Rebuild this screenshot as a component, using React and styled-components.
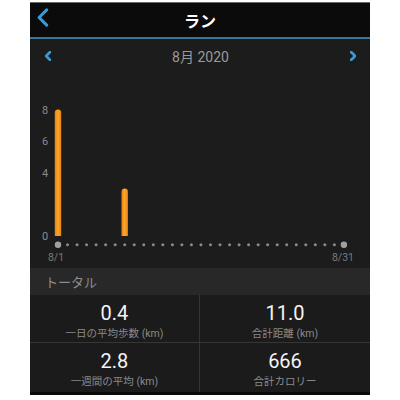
import styled, { createGlobalStyle } from "styled-components";

const GlobalStyle = createGlobalStyle`
	body {
		margin: 0;
		background: #ffffff;
		font-family: "Roboto", "Noto Sans CJK JP", sans-serif;
	}
`;

const Screen = styled.div`
	width: 340px;
	margin: 2px 0 0 30px;
	border-top: 1px solid #6a6a6a;
	border-bottom: 3px solid #0a0a0a;
	background-color: #1c1c1c;
`;

// 上部のナビゲーションバー
const NavBar = styled.div`
	height: 34px;
	display: flex;
	align-items: center;
	justify-content: center;
	position: relative;
	background-color: #0b0b0b;
	border-bottom: 2px solid #36779e;
`;

const NavTitle = styled.div`
	color: #ffffff;
	font-size: 16px;
	font-weight: 700;
`;

const BackButton = styled.div`
	position: absolute;
	left: 7px;
	top: 5px;
	display: flex;
`;

const MonthRow = styled.div`
	height: 33px;
	display: flex;
	align-items: center;
	justify-content: space-between;
	padding: 0 14px 0 15px;
`;

const MonthLabel = styled.div`
	color: #9a9a9a;
	font-size: 14px;
`;

const ChartBox = styled.div`
	height: 196px;
`;

const SectionHeader = styled.div`
	height: 27px;
	display: flex;
	align-items: center;
	padding-left: 15px;
	background-color: #282828;
	color: #8c8c8c;
	font-size: 13px;
`;

const StatGrid = styled.div`
	display: grid;
	grid-template-columns: 1fr 1fr;
	grid-template-rows: 48px 49px;
	background-color: #1b1b1b;
`;

const StatCell = styled.div`
	display: flex;
	flex-direction: column;
	align-items: center;
	padding-top: 6px;
	box-sizing: border-box;
	border-right: ${(p) => (p.$left ? "1px solid #363636" : "none")};
	border-bottom: ${(p) => (p.$top ? "1px solid #363636" : "none")};
`;

const StatValue = styled.div`
	color: #f4f4f4;
	font-size: 20px;
	line-height: 24px;
`;

const StatLabel = styled.div`
	color: #8a8a8a;
	font-size: 10.5px;
	line-height: 14px;
	margin-top: 2px;
`;

const Chevron = ({ dir, size = 10, stroke = 2.6, color = "#3b9ad6" }) => (
	<svg width={size * 0.62} height={size} viewBox="0 0 6 10">
		<path
			d={dir === "left" ? "M5 1 L1 5 L5 9" : "M1 1 L5 5 L1 9"}
			fill="none"
			stroke={color}
			strokeWidth={stroke * (10 / size)}
			strokeLinecap="round"
			strokeLinejoin="round"
		/>
	</svg>
);

// 日ごとの距離 (km)
const daily = Array.from({ length: 31 }, (_, i) => (i === 0 ? 8.0 : i === 7 ? 3.0 : 0));

function RunChart() {
	const x0 = 28;
	const step = 9.53;
	const base = 164;
	const unit = 15.8;
	return (
		<svg width="340" height="196" viewBox="0 0 340 196">
			<defs>
				<linearGradient id="bar" x1="0" x2="1" y1="0" y2="0">
					<stop offset="0" stopColor="#e8820f" />
					<stop offset="0.5" stopColor="#fba62b" />
					<stop offset="1" stopColor="#e8820f" />
				</linearGradient>
				<clipPath id="plot">
					<rect x="0" y="0" width="340" height={base} />
				</clipPath>
			</defs>
			<g clipPath="url(#plot)">
				{daily.map((v, i) =>
					v > 0 ? (
						<rect
							key={"b" + i}
							x={x0 + i * step - 3.2}
							y={base - v * unit}
							width="6.4"
							height={v * unit + 4}
							rx="3.2"
							fill="url(#bar)"
						/>
					) : null
				)}
			</g>
			{[8, 6, 4, 0].map((v) => (
				<text
					key={v}
					x="15"
					y={base - v * unit + 4}
					fill="#8a8a8a"
					fontSize="11"
					textAnchor="middle"
					fontFamily="Roboto, sans-serif"
				>
					{v}
				</text>
			))}
			{daily.map((_, i) => {
				const end = i === 0 || i === 30;
				return (
					<circle
						key={"d" + i}
						cx={x0 + i * step}
						cy="172.7"
						r={end ? 3.2 : 1.5}
						fill={end ? "#a0a0a0" : "#8a8a8a"}
					/>
				);
			})}
			<text x="26" y="189" fill="#7a7a7a" fontSize="10.5" textAnchor="middle" fontFamily="Roboto, sans-serif">
				8/1
			</text>
			<text x="313" y="189" fill="#7a7a7a" fontSize="10.5" textAnchor="middle" fontFamily="Roboto, sans-serif">
				8/31
			</text>
		</svg>
	);
}

const stats = [
	{ value: "0.4", label: "一日の平均歩数 (km)" },
	{ value: "11.0", label: "合計距離 (km)" },
	{ value: "2.8", label: "一週間の平均 (km)" },
	{ value: "666", label: "合計カロリー" },
];

export default function App() {
	return (
		<>
			<GlobalStyle />
			<Screen>
				<NavBar>
					<BackButton>
						<Chevron dir="left" size={19} stroke={3} />
					</BackButton>
					<NavTitle>ラン</NavTitle>
				</NavBar>
				<MonthRow>
					<Chevron dir="left" size={10} stroke={2.6} />
					<MonthLabel>8月 2020</MonthLabel>
					<Chevron dir="right" size={10} stroke={2.6} />
				</MonthRow>
				<ChartBox>
					<RunChart />
				</ChartBox>
				<SectionHeader>トータル</SectionHeader>
				<StatGrid>
					{stats.map((s, i) => (
						<StatCell key={s.label} $left={i % 2 === 0} $top={i < 2}>
							<StatValue>{s.value}</StatValue>
							<StatLabel>{s.label}</StatLabel>
						</StatCell>
					))}
				</StatGrid>
			</Screen>
		</>
	);
}
